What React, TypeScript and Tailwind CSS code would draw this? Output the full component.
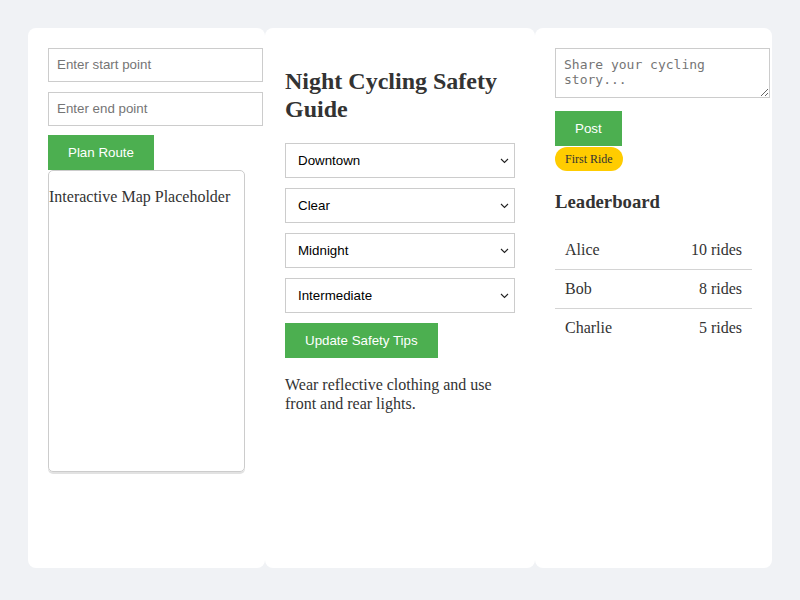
const serif = "font-['Liberation_Serif',serif]";
const sans = "font-['Liberation_Sans',Arial,sans-serif]";

const riders = [
  { name: "Alice", rides: "10 rides" },
  { name: "Bob", rides: "8 rides" },
  { name: "Charlie", rides: "5 rides" },
];

const selects = [
  ["Downtown", "Suburbs", "Countryside"],
  ["Clear", "Rainy", "Foggy"],
  ["Midnight", "Evening", "Early Morning"],
  ["Intermediate", "Beginner", "Advanced"],
];

const Chevron = () => (
  <svg
    className="pointer-events-none absolute right-[6px] top-1/2 -translate-y-1/2"
    width="9"
    height="6"
    viewBox="0 0 9 6"
    fill="none"
  >
    <path d="M1 1l3.5 3.5L8 1" stroke="#222" strokeWidth="1.1" />
  </svg>
);

const App = () => {
  return (
    <div className={`min-h-[600px] w-full bg-[#f0f2f5] p-[28px] text-[#333] ${serif}`}>
      <div className="grid h-[540px] grid-cols-[237px_270px_237px]">
        {/* -- ROUTE PLANNER -- */}
        <section className="rounded-lg bg-white p-5">
          <input
            placeholder="Enter start point"
            className={`mb-[10px] box-content block h-[16px] w-full border border-[#ccc] px-2 py-2 text-[13.33px] leading-[16px] placeholder:text-[#757575] ${sans}`}
          />
          <input
            placeholder="Enter end point"
            className={`mb-[9px] box-content block h-[16px] w-full border border-[#ccc] px-2 py-2 text-[13.33px] leading-[16px] placeholder:text-[#757575] ${sans}`}
          />
          <button className={`block bg-[#4CAF50] px-5 py-[10px] text-[13.33px] leading-[15px] text-white ${sans}`}>
            Plan Route
          </button>
          <div className="h-[302px] w-full rounded-[5px] border border-[#ccc] shadow-[0_2px_0_#e2e2e2]">
            <p className="my-[17px] text-base leading-[18px]">Interactive Map Placeholder</p>
          </div>
        </section>

        {/* -- SAFETY GUIDE -- */}
        <section className="rounded-lg bg-white p-5">
          <h2 className="my-[20px] text-2xl font-bold leading-[27.5px]">Night Cycling Safety Guide</h2>
          {selects.map((opts) => (
            <div key={opts[0]} className="relative mb-[10px]">
              <select
                className={`block h-[35px] w-full appearance-none border border-[#ccc] bg-white pl-3 pr-6 text-[13.33px] text-black ${sans}`}
              >
                {opts.map((o) => (
                  <option key={o}>{o}</option>
                ))}
              </select>
              <Chevron />
            </div>
          ))}
          <button className={`block bg-[#4CAF50] px-5 py-[10px] text-[13.33px] leading-[15px] text-white ${sans}`}>
            Update Safety Tips
          </button>
          <p className="mb-4 mt-[17px] text-base leading-[19px]">
            Wear reflective clothing and use front and rear lights.
          </p>
        </section>

        {/* -- COMMUNITY -- */}
        <section className="rounded-lg bg-white p-5">
          <textarea
            placeholder="Share your cycling story..."
            className="mb-[13px] box-content block h-[32px] w-full border border-[#ccc] px-2 py-2 font-['DejaVu_Sans_Mono',monospace] text-[13px] leading-[15px] placeholder:text-[#757575]"
          />
          <button className={`block bg-[#4CAF50] px-5 py-[10px] text-[13.33px] leading-[15px] text-white ${sans}`}>
            Post
          </button>
          <span className="mt-px inline-block rounded-[20px] bg-[#ffcc00] px-[10px] py-[5px] text-[12px] leading-[14px]">
            First Ride
          </span>
          <h3 className="mb-[18.7px] mt-[19.7px] text-[18.72px] font-bold leading-[21.5px]">Leaderboard</h3>
          <table className="w-full border-collapse">
            <tbody>
              {riders.map((r, i) => (
                <tr key={r.name} className={i < riders.length - 1 ? "border-b border-[#d4d4d4]" : ""}>
                  <td className="p-[10px] text-base leading-[18px]">{r.name}</td>
                  <td className="p-[10px] text-right text-base leading-[18px]">{r.rides}</td>
                </tr>
              ))}
            </tbody>
          </table>
        </section>
      </div>
    </div>
  );
};

export default App;
